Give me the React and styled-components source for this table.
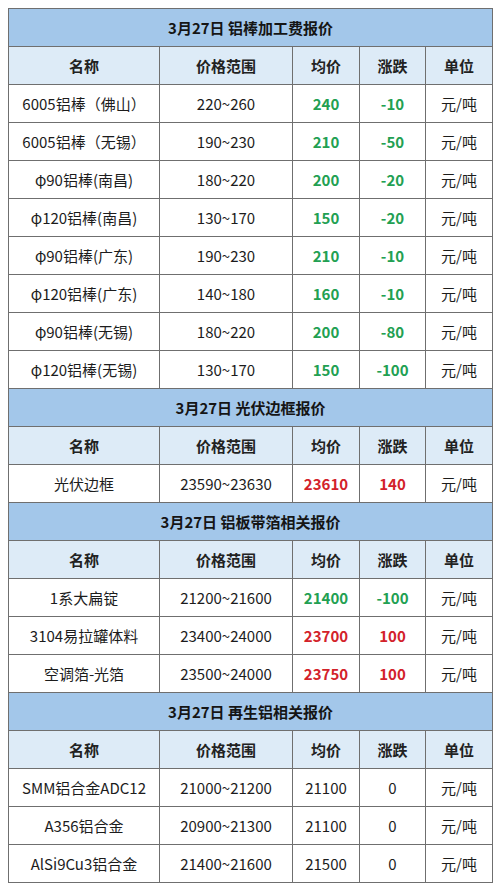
import React from "react";
import styled, { createGlobalStyle } from "styled-components";

const GlobalStyle = createGlobalStyle`
    body {
        margin: 0;
        background: #ffffff;
        font-family: "Noto Sans CJK SC", "Noto Sans", sans-serif;
        color: #1c1c1c;
    }
`;

const Page = styled.div`
    padding: 8px;
`;

const Table = styled.table`
    width: 484px;
    border-collapse: collapse;
    table-layout: fixed;
    font-size: 15px;
`;

const Col = styled.col`
    width: ${(props) => props.$w}px;
`;

const TitleCell = styled.td`
    height: 37px;
    padding: 0;
    background: #a3c7ea;
    border: 1px solid #6f6f6f;
    text-align: center;
    font-weight: bold;
    color: #151515;
`;

const HeadCell = styled.td`
    height: 37px;
    padding: 0;
    background: #ddebf7;
    border: 1px solid #6f6f6f;
    text-align: center;
    font-weight: bold;
    color: #222222;
`;

const Cell = styled.td`
    height: 37px;
    padding: 0;
    border: 1px solid #6f6f6f;
    text-align: center;
    white-space: nowrap;
    color: ${(props) =>
        props.$tone === "up" ? "#d3222a" : props.$tone === "down" ? "#22a052" : "#1c1c1c"};
    font-weight: ${(props) => (props.$tone ? "bold" : "normal")};
`;

const sections = [
    {
        title: "3月27日 铝棒加工费报价",
        rows: [
            ["6005铝棒（佛山）", "220~260", "240", "-10"],
            ["6005铝棒（无锡）", "190~230", "210", "-50"],
            ["φ90铝棒(南昌)", "180~220", "200", "-20"],
            ["φ120铝棒(南昌)", "130~170", "150", "-20"],
            ["φ90铝棒(广东)", "190~230", "210", "-10"],
            ["φ120铝棒(广东)", "140~180", "160", "-10"],
            ["φ90铝棒(无锡)", "180~220", "200", "-80"],
            ["φ120铝棒(无锡)", "130~170", "150", "-100"],
        ],
    },
    {
        title: "3月27日 光伏边框报价",
        rows: [["光伏边框", "23590~23630", "23610", "140"]],
    },
    {
        title: "3月27日 铝板带箔相关报价",
        rows: [
            ["1系大扁锭", "21200~21600", "21400", "-100"],
            ["3104易拉罐体料", "23400~24000", "23700", "100"],
            ["空调箔-光箔", "23500~24000", "23750", "100"],
        ],
    },
    {
        title: "3月27日 再生铝相关报价",
        rows: [
            ["SMM铝合金ADC12", "21000~21200", "21100", "0"],
            ["A356铝合金", "20900~21300", "21100", "0"],
            ["AlSi9Cu3铝合金", "21400~21600", "21500", "0"],
        ],
    },
];

const heads = ["名称", "价格范围", "均价", "涨跌", "单位"];
const widths = [151, 133, 67, 66, 67];

function toneOf(change) {
    if (change.startsWith("-")) return "down";
    if (change === "0") return undefined;
    return "up";
}

export default function App() {
    return (
        <Page>
            <GlobalStyle />
            <Table>
                <colgroup>
                    {widths.map((w, i) => (
                        <Col key={i} $w={w} />
                    ))}
                </colgroup>
                <tbody>
                    {sections.map((section) => (
                        <React.Fragment key={section.title}>
                            <tr>
                                <TitleCell colSpan={5}>{section.title}</TitleCell>
                            </tr>
                            <tr>
                                {heads.map((h) => (
                                    <HeadCell key={h}>{h}</HeadCell>
                                ))}
                            </tr>
                            {section.rows.map((row) => {
                                const tone = toneOf(row[3]);
                                return (
                                    <tr key={row[0]}>
                                        <Cell>{row[0]}</Cell>
                                        <Cell>{row[1]}</Cell>
                                        <Cell $tone={tone}>{row[2]}</Cell>
                                        <Cell $tone={tone}>{row[3]}</Cell>
                                        <Cell>元/吨</Cell>
                                    </tr>
                                );
                            })}
                        </React.Fragment>
                    ))}
                </tbody>
            </Table>
        </Page>
    );
}
